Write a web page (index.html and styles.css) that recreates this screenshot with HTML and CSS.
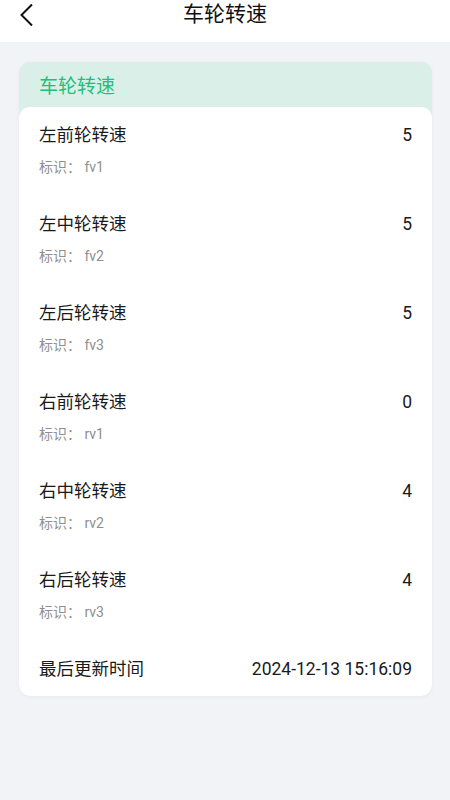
FILE: index.html
```html
<!DOCTYPE html>
<html lang="zh-CN">
<head>
<meta charset="utf-8">
<title>车轮转速</title>
<link rel="stylesheet" href="styles.css">
</head>
<body>
<header class="topbar">
  <span class="back">
    <svg width="16" height="24" viewBox="0 0 16 24"><path d="M13 2.5 L2.5 13 L13 23.5" fill="none" stroke="#111" stroke-width="2"/></svg>
  </span>
  <h1 class="title">车轮转速</h1>
</header>
<main class="page">
  <section class="card">
    <div class="card-head">车轮转速</div>
    <div class="card-body">
      <div class="row">
        <div class="row-main"><span class="name">左前轮转速</span><span class="val">5</span></div>
        <div class="tag">标识： fv1</div>
      </div>
      <div class="row">
        <div class="row-main"><span class="name">左中轮转速</span><span class="val">5</span></div>
        <div class="tag">标识： fv2</div>
      </div>
      <div class="row">
        <div class="row-main"><span class="name">左后轮转速</span><span class="val">5</span></div>
        <div class="tag">标识： fv3</div>
      </div>
      <div class="row">
        <div class="row-main"><span class="name">右前轮转速</span><span class="val">0</span></div>
        <div class="tag">标识： rv1</div>
      </div>
      <div class="row">
        <div class="row-main"><span class="name">右中轮转速</span><span class="val">4</span></div>
        <div class="tag">标识： rv2</div>
      </div>
      <div class="row">
        <div class="row-main"><span class="name">右后轮转速</span><span class="val">4</span></div>
        <div class="tag">标识： rv3</div>
      </div>
      <div class="row last">
        <div class="row-main"><span class="name">最后更新时间</span><span class="val">2024-12-13 15:16:09</span></div>
      </div>
    </div>
  </section>
</main>
</body>
</html>
```

FILE: styles.css
```css
* { box-sizing: border-box; }
html, body { margin: 0; padding: 0; }
body {
  width: 450px;
  height: 800px;
  background: #f2f3f7;
  font-family: Roboto, "Noto Sans CJK SC", sans-serif;
  color: #1a1a1a;
}
.topbar {
  height: 42px;
  background: #fff;
  display: flex;
  align-items: center;
  justify-content: center;
  position: relative;
}
.back {
  position: absolute;
  left: 19px;
  top: 2px;
  width: 16px;
  height: 24px;
  display: block;
}
.back svg { display: block; }
.title {
  margin: 0;
  font-size: 21px;
  font-weight: 400;
  line-height: 28px;
  margin-top: -14px;
  color: #111;
}
.page {
  padding: 20px 18px 0 19px;
}
.card {
  border-radius: 11px;
  background: #d9efe8;
  box-shadow: 0 1px 4px rgba(0,0,0,0.04);
  overflow: hidden;
}
.card-head {
  height: 45px;
  padding: 0 20px;
  display: flex;
  align-items: center;
  font-size: 19px;
  color: #22bf7b;
}
.card-body {
  background: #fff;
  border-radius: 11px;
}
.row {
  height: 89px;
  padding: 17px 20px 0 20px;
}
.row.last {
  height: 55px;
  padding-top: 17px;
}
.row-main {
  display: flex;
  justify-content: space-between;
  align-items: baseline;
  height: 22px;
  line-height: 22px;
}
.name {
  font-size: 17.5px;
  color: #1a1a1a;
}
.val {
  font-size: 17.5px;
  color: #1a1a1a;
}
.tag {
  margin-top: 12px;
  font-size: 14px;
  line-height: 18px;
  color: #8f8f8f;
}
```
